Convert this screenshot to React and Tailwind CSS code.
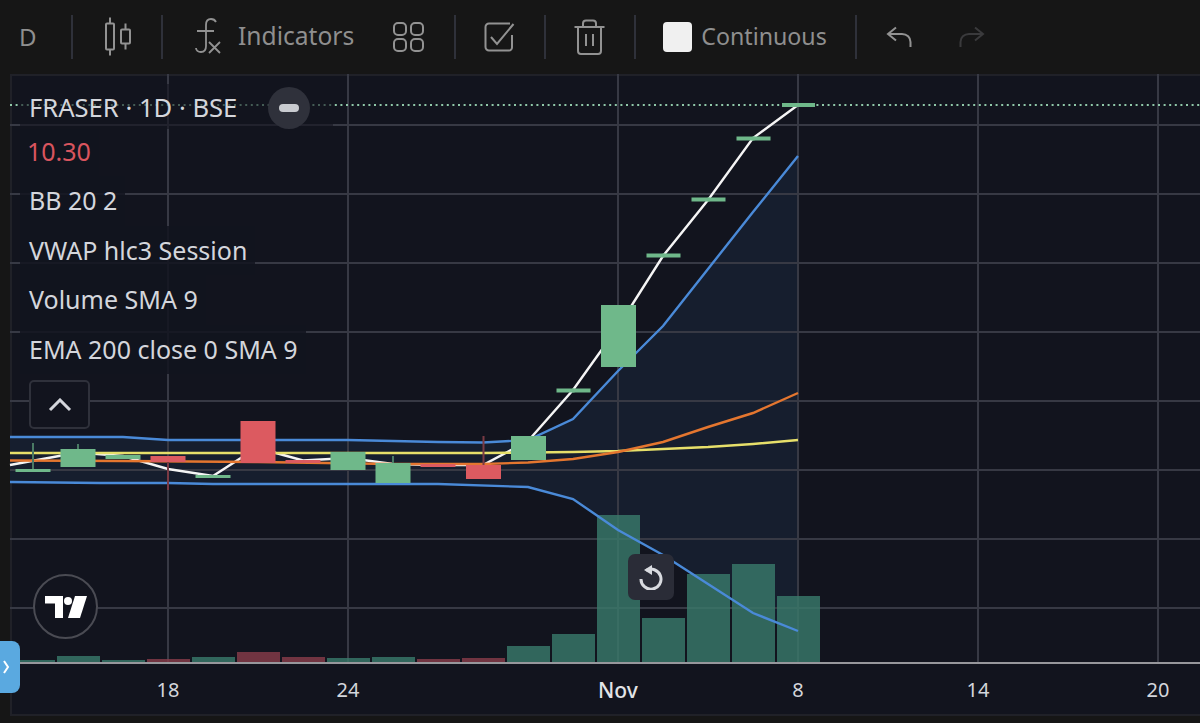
const H = [125, 194, 263, 332, 401, 470, 539, 608];
const V = [168, 348, 618, 798, 978, 1158];
const G = "#6fb88a";
const R = "#dc5a60";
const DG = "#4a7a64";
const DR = "#7a3a44";
const candles = [
  [33, 469, 472, 443, 470, G, 35, DG],
  [78, 449, 467, 444, 449, G, 35, DG],
  [123, 455, 459, 455, 459, G, 35, G],
  [168, 456, 462, 456, 490, R, 35, DR],
  [213, 475, 478, 475, 478, G, 35, G],
  [258, 421, 463, 421, 463, R, 35, R],
  [303, 460, 463, 460, 463, R, 35, R],
  [348, 452, 470, 452, 470, G, 35, G],
  [393, 463, 483, 456, 483, G, 35, DG],
  [438, 464, 467, 464, 467, R, 35, R],
  [483.5, 465, 479, 436, 479, R, 35, DR],
  [528.5, 436, 460, 436, 460, G, 35, G],
  [573.5, 388.5, 392.5, 388.5, 392.5, G, 34, G],
  [618.5, 305, 367, 305, 367, G, 35, G],
  [663.5, 253.5, 257.5, 253.5, 257.5, G, 34, G],
  [708.5, 197.5, 201.5, 197.5, 201.5, G, 34, G],
  [753.5, 136.5, 140.5, 136.5, 140.5, G, 34, G],
  [798.5, 103, 107, 103, 107, G, 33, G],
];
const vols = [
  [33.5, 660, G],[78.5, 656, G],[123.5, 660, G],[168.5, 659, R],[213.5, 657, G],[258.5, 652, R],[303.5, 657, R],[348.5, 658, G],[393.5, 657, G],[438.5, 659, R],[483.5, 658, R],
  [528.5, 646, G],[573.5, 634, G],[618.5, 515, G],[663.5, 618, G],[708.5, 574, G],[753.5, 564, G],[798.5, 596, G],
];
const upperPts = [[10,437],[60,437],[123,437],[168,440],[258,440],[348,440],[438,442],[483,442.5],[528,440],[573,419],[618,371],[663,326],[708,269],[753,212],[798,156]];
const lowerPts = [[10,482],[100,483],[168,483],[213,484],[300,484],[393,484],[438,484],[528,487],[573,499],[618,530],[663,555],[708,584],[753,613],[798,631]];
const upper = upperPts.join(" ");
const lower = lowerPts.join(" ");
const band = [...upperPts, ...[...lowerPts].reverse()].join(" ");
const price = "10,465 78,452.5 123,456 168,469 213,476 258,447 276,453 303,460.5 348,458 393,464 438,465 483,465 528,441 573,390 618,327 663,256 708,200 753,138 798,105";
const vwap = "10,453 123,453 258,453 393,453 483,453 573,452 618,451 663,449 708,447 753,444 798,440";
const ema = "10,460.500 123,461 258,462 393,464 483,464 528,462.500 573,459 618,452 663,442 708,427 753,413 798,393";

function Divider() {
  return <div className="h-[44px] w-[2px] shrink-0 bg-[#2f313a]" />;
}

function Toolbar() {
  const gray = "#929292";
  return (
    <div className="flex h-[74px] shrink-0 items-center bg-[#161616] pb-[1px] text-[24px] text-[#8f8f8f]">
      <span className="ml-[19px] w-[52px]">D</span>
      <Divider />
      <svg className="ml-[30px] h-[40px] w-[32px]" viewBox="0 0 32 40" fill="none" stroke={gray} strokeWidth="2">
        <path d="M7 0.500v6M7 32.500v6M22.500 6.500v6M22.500 26.500v6" />
        <rect x="3" y="6.500" width="8" height="26" rx="1" />
        <rect x="18" y="12.500" width="9" height="14" rx="1" />
      </svg>
      <div className="ml-[26px]"><Divider /></div>
      <svg className="ml-[30px] h-[40px] w-[30px]" viewBox="0 0 30 40" fill="none" stroke={gray} strokeWidth="1.800">
        <path d="M23 5c-1-2-3-3-5-3-3 0-5 2-5 6v21c0 4-2 6-5 6-3 0-5-2-5-4" />
        <path d="M4 14h17M16 25l11 11M27 25L16 36" />
      </svg>
      <span className="ml-[15px] text-[24.6px]">Indicators</span>
      <svg className="ml-[39px] h-[30px] w-[31px]" viewBox="0 0 31 30" fill="none" stroke={gray} strokeWidth="2">
        <rect x="1" y="1" width="12" height="12" rx="4" />
        <rect x="18" y="1" width="12" height="12" rx="4" />
        <rect x="1" y="17" width="12" height="12" rx="4" />
        <rect x="18" y="17" width="12" height="12" rx="4" />
      </svg>
      <div className="ml-[30px]"><Divider /></div>
      <svg className="ml-[28px] h-[30px] w-[31px]" viewBox="0 0 31 30" fill="none" stroke={gray} strokeWidth="2">
        <path d="M26 1.500H5a3.500 3.500 0 0 0-3.500 3.500v20a3.500 3.500 0 0 0 3.500 3.500h20a3 3 0 0 0 3-3V13" />
        <path d="M7 15l6 7L29.500 2" />
      </svg>
      <div className="ml-[29px]"><Divider /></div>
      <svg className="ml-[28px] h-[36px] w-[31px]" viewBox="0 0 31 36" fill="none" stroke={gray} strokeWidth="2">
        <path d="M0.500 8h30M9 8V4.500a3 3 0 0 1 3-3h7a3 3 0 0 1 3 3V8" />
        <path d="M4 8v24a3 3 0 0 0 3 3h17a3 3 0 0 0 3-3V8M12 15v12M19 15v12" />
      </svg>
      <div className="ml-[29px]"><Divider /></div>
      <div className="ml-[27px] h-[30px] w-[29px] rounded-[4px] bg-[#f0f0f0]" />
      <span className="ml-[9px] text-[23.2px]">Continuous</span>
      <div className="ml-[28px]"><Divider /></div>
      <svg className="ml-[29px] h-[21px] w-[26px]" viewBox="0 0 26 21" fill="none" stroke={gray} strokeWidth="2">
        <path d="M10 1.500L2 8l8 6.500M2 8h14c5 0 8.500 3.500 8.500 8v5" />
      </svg>
      <svg className="ml-[47px] h-[21px] w-[26px]" viewBox="0 0 26 21" fill="none" stroke="#3a3a3c" strokeWidth="2">
        <path d="M16 1.500L24 8l-8 6.500M24 8H10c-5 0-8.500 3.500-8.500 8v5" />
      </svg>
    </div>
  );
}

function Chart() {
  return (
    <svg className="absolute left-0 top-0 h-[723px] w-[1200px]" viewBox="0 0 1200 723" fill="none">
      <polygon points={band} fill="#161e2e" />
      {H.map((y) => <line key={y} x1="10" x2="1200" y1={y} y2={y} stroke="#373944" strokeWidth="2" />)}
      {V.map((x) => <line key={x} x1={x} x2={x} y1="74" y2="662" stroke="#373944" strokeWidth="2" />)}
      <line x1="10" x2="1200" y1="105" y2="105" stroke="#8fc7a8" strokeWidth="2" strokeDasharray="2 3.600" />
      {vols.map(([x, y, c]) => (
        <rect key={x} x={x - 21.5} y={y} width="43" height={662 - y} fill={c === G ? "#3a7a6b" : "#8a3c4a"} fillOpacity="0.8" />
      ))}
      <line x1="10" x2="1200" y1="663" y2="663" stroke="#97979c" strokeWidth="2" />
      <polyline points={price} stroke="#f5f5f5" strokeWidth="2.400" />
      <polyline points={upper} stroke="#4a8ad8" strokeWidth="2.400" />
      <polyline points={lower} stroke="#4a8ad8" strokeWidth="2.400" />
      <polyline points={vwap} stroke="#e6df6a" strokeWidth="2.400" />
      <polyline points={ema} stroke="#e4762f" strokeWidth="2.400" />
      {candles.map(([x, top, bot, wTop, wBot, c, w, wc]) => (
        <g key={x}>
          <line x1={x} x2={x} y1={wTop} y2={wBot} stroke={wc} strokeWidth="2" />
          <rect x={x - w / 2} y={top} width={w} height={bot - top} fill={c} />
        </g>
      ))}
    </svg>
  );
}

function Legend() {
  const rows = ["BB 20 2", "VWAP hlc3 Session", "Volume SMA 9", "EMA 200 close 0 SMA 9"];
  return (
    <div className="absolute left-[20px] top-[84px] flex flex-col items-start text-[25px] leading-[32px] text-[#d4d6dc]">
      <div className="flex h-[45px] items-center bg-[#12141e]/60 pl-[9px] pr-[23px]">
        <span className="mt-[3px] text-[25.600px]">FRASER · 1D · BSE</span>
        <span className="ml-[31px] mt-[3px] flex h-[42px] w-[42px] items-center justify-center rounded-full bg-[#2f313b]">
          <span className="h-[8px] w-[20px] rounded-full bg-[#c9cbd0]" />
        </span>
      </div>
      <span className="bg-[#12141e]/85 pl-[7px] pr-[8px] pt-[6px] pb-[9px] text-[#d9555e]">10.30</span>
      {rows.map((r) => (
        <span key={r} className="bg-[#12141e]/85 pl-[9px] pr-[8px] pt-[8px] pb-[9.500px]">{r}</span>
      ))}
      <button className="ml-[9px] mt-[6px] flex h-[49px] w-[61px] items-center justify-center rounded-[5px] border-2 border-[#2f313b] bg-[#12141e]">
        <svg width="24" height="14" viewBox="0 0 24 14" fill="none" stroke="#d4d6dc" strokeWidth="3"><path d="M2 12L12 2l10 10" /></svg>
      </button>
    </div>
  );
}

export default function App() {
  return (
    <div className="flex h-[723px] w-[1200px] flex-col overflow-hidden bg-[#161616]" style={{ fontFamily: '"Noto Sans", sans-serif' }}>
      <Toolbar />
      <div className="ml-[10px] h-[642px] shrink-0 border-y-2 border-l-2 border-[#202128] bg-[#12141e]" />
      <div className="h-[7px] shrink-0 bg-[#161616]" />
      <Chart />
      <Legend />
      <div className="absolute left-[33px] top-[574px] flex h-[65px] w-[65px] items-center justify-center rounded-full border-2 border-[#4a4b53] bg-[#12141e]">
        <svg width="42" height="22" viewBox="0 0 42 22" fill="#fff">
          <path d="M0 0h18v22h-8V7.500H0z" />
          <circle cx="23" cy="5" r="4" />
          <path d="M30 0h12l-7 22H23z" />
        </svg>
      </div>
      <div className="absolute left-0 top-[641px] flex h-[52px] w-[20px] items-center rounded-r-[8px] bg-[#5aa9e0] pl-[2px]">
        <svg width="8" height="14" viewBox="0 0 8 14" fill="none" stroke="#fff" strokeWidth="2"><path d="M2 1l4 6-4 6" /></svg>
      </div>
      <div className="absolute left-[628px] top-[554px] flex h-[46px] w-[46px] items-center justify-center rounded-[7px] bg-[#2a2c37]">
        <svg width="24" height="26" viewBox="0 0 24 26" fill="none" stroke="#d9dbe0" strokeWidth="3">
          <path d="M7 6.500a10 10 0 1 1-5 8.500" />
          <path d="M13 1v10L5 6z" fill="#d9dbe0" stroke="none" />
        </svg>
      </div>
      {[["18", 168], ["24", 348], ["8", 798], ["14", 978], ["20", 1158]].map(([t, x]) => (
        <span key={t} className="absolute top-[676px] -translate-x-1/2 text-[20px] leading-[28px] text-[#d4d6dc]" style={{ left: x }}>{t}</span>
      ))}
      <span className="absolute left-[598px] top-[676px] text-[21px] font-medium leading-[28px] text-[#e2e4e8]">Nov</span>
    </div>
  );
}
